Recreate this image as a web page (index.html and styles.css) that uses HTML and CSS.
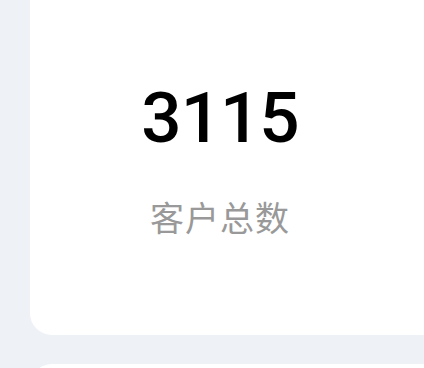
FILE: index.html
```html
<!DOCTYPE html>
<html lang="zh-CN">
<head>
<meta charset="utf-8">
<link rel="stylesheet" href="styles.css">
</head>
<body>
<div class="page">
  <div class="card stat">
    <div class="stat-value">3115</div>
    <div class="stat-label">客户总数</div>
  </div>
  <div class="card next"></div>
</div>
</body>
</html>
```
FILE: styles.css
```css
html, body {
  margin: 0;
  padding: 0;
  background: #eef1f5;
  overflow: hidden;
}
.page {
  width: 424px;
  height: 368px;
  overflow: hidden;
  padding-left: 30px;
  box-sizing: border-box;
}
.card {
  background: #ffffff;
  border-radius: 22px;
  width: 440px;
  box-sizing: border-box;
}
.stat {
  margin-top: -19px;
  padding: 101px 60px 101px 0;
  display: flex;
  flex-direction: column;
  align-items: center;
  gap: 46px;
}
.stat-value {
  font-family: Roboto, "Noto Sans", sans-serif;
  font-size: 71px;
  line-height: 72px;
  color: #000000;
  font-weight: 500;
  letter-spacing: -1px;
}
.stat-label {
  font-family: "Noto Sans CJK SC", sans-serif;
  font-size: 34px;
  line-height: 34px;
  color: #999999;
  letter-spacing: 1px;
}
.next {
  margin-top: 29px;
  height: 120px;
}
```
